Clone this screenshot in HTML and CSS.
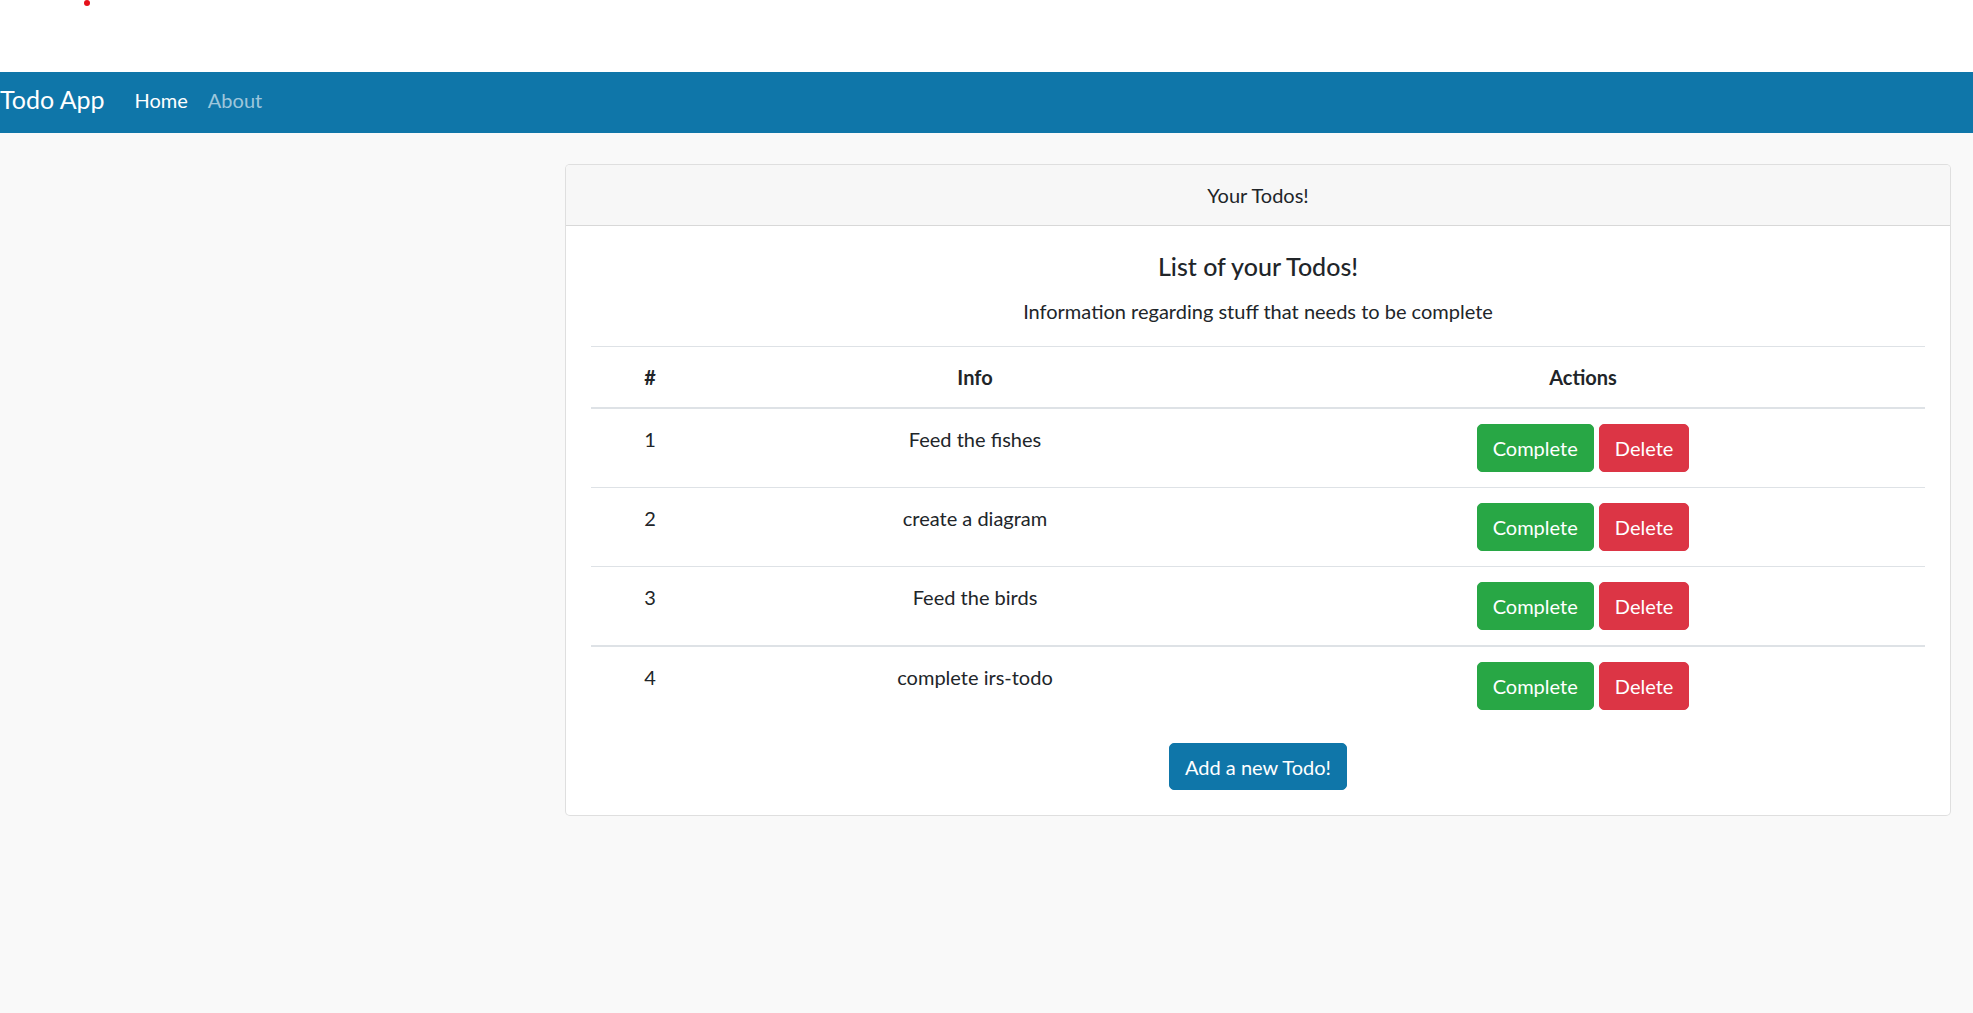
FILE: index.html
```html
<!DOCTYPE html>
<html lang="en">
<head>
<meta charset="utf-8">
<title>Todo App</title>
<link rel="stylesheet" href="styles.css">
</head>
<body>
<div class="topbar"><span class="dot"></span></div>
<nav class="navbar">
  <a class="brand" href="#">Todo App</a>
  <a class="nav-link active" href="#">Home</a>
  <a class="nav-link" href="#">About</a>
</nav>
<main class="main">
  <section class="card">
    <div class="card-header">Your Todos!</div>
    <div class="card-body">
      <h5 class="card-title">List of your Todos!</h5>
      <p class="card-text">Information regarding stuff that needs to be complete</p>
      <table class="table">
        <colgroup><col class="c1"><col class="c2"><col class="c3"></colgroup>
        <thead>
          <tr><th>#</th><th>Info</th><th>Actions</th></tr>
        </thead>
        <tbody>
          <tr><td>1</td><td>Feed the fishes</td><td><button class="btn btn-success">Complete</button> <button class="btn btn-danger">Delete</button> </td></tr>
          <tr><td>2</td><td>create a diagram</td><td><button class="btn btn-success">Complete</button> <button class="btn btn-danger">Delete</button> </td></tr>
          <tr><td>3</td><td>Feed the birds</td><td><button class="btn btn-success">Complete</button> <button class="btn btn-danger">Delete</button> </td></tr>
        </tbody>
        <tbody>
          <tr><td>4</td><td>complete irs-todo</td><td><button class="btn btn-success">Complete</button> <button class="btn btn-danger">Delete</button> </td></tr>
        </tbody>
      </table>
      <div class="add-row"><button class="btn btn-primary">Add a new Todo!</button></div>
    </div>
  </section>
</main>
</body>
</html>
```
FILE: styles.css
```css
* { box-sizing: border-box; }
html, body { margin: 0; padding: 0; }
body {
  font-family: Lato, "Open Sans", "Noto Sans", sans-serif;
  font-size: 20px;
  line-height: 1.5;
  color: #212529;
  background: #f9f9f9;
  min-height: 1013px;
}
.topbar {
  position: relative;
  height: 72px;
  background: #ffffff;
}
.dot {
  position: absolute;
  left: 84px;
  top: 0;
  width: 6px;
  height: 6px;
  border-radius: 50%;
  background: #e5101a;
}
.navbar {
  display: flex;
  align-items: center;
  height: 61px;
  background: #0f76a9;
  padding: 0 0 6px;
}
.brand {
  font-size: 25px;
  color: #ffffff;
  text-decoration: none;
  margin-right: 20px;
  line-height: 1.5;
}
.nav-link {
  color: rgba(255, 255, 255, 0.6);
  text-decoration: none;
  padding: 0 10px;
  font-size: 20px;
}
.nav-link.active { color: #ffffff; }
.main {
  padding: 31px 22px 0 565px;
}
.card {
  width: 1386px;
  background: #ffffff;
  border: 1px solid rgba(0, 0, 0, 0.125);
  border-radius: 5px;
}
.card-header {
  background: #f7f7f7;
  border-bottom: 1px solid rgba(0, 0, 0, 0.125);
  padding: 15px 25px;
  text-align: center;
  border-radius: 4px 4px 0 0;
}
.card-body {
  padding: 25px;
  text-align: center;
}
.card-title {
  margin: 0 0 15px;
  font-size: 25px;
  font-weight: 500;
  line-height: 1.2;
}
.card-text {
  margin: 0 0 20px;
}
.table {
  width: 100%;
  border-collapse: collapse;
  margin-bottom: 18px;
}
.c1 { width: 118px; }
.c2 { width: 532px; }
.table th, .table td {
  padding: 15px;
  vertical-align: top;
  text-align: center;
  border-top: 1px solid #dee2e6;
}
.table th { font-weight: 700; }
.table thead th {
  border-bottom: 2px solid #dee2e6;
}
.table tbody + tbody td { border-top: 2px solid #dee2e6; }
.btn {
  font-family: inherit;
  font-size: 20px;
  line-height: 1.5;
  padding: 8px 15px;
  border: 1px solid transparent;
  border-radius: 5px;
  color: #ffffff;
  cursor: pointer;
}
.btn-success { background: #28a745; border-color: #28a745; }
.btn-danger { background: #dc3545; border-color: #dc3545; }
.btn-primary { background: #0f76a9; border-color: #0f76a9; padding: 7.5px 15px; }
.add-row { text-align: center; }
```
